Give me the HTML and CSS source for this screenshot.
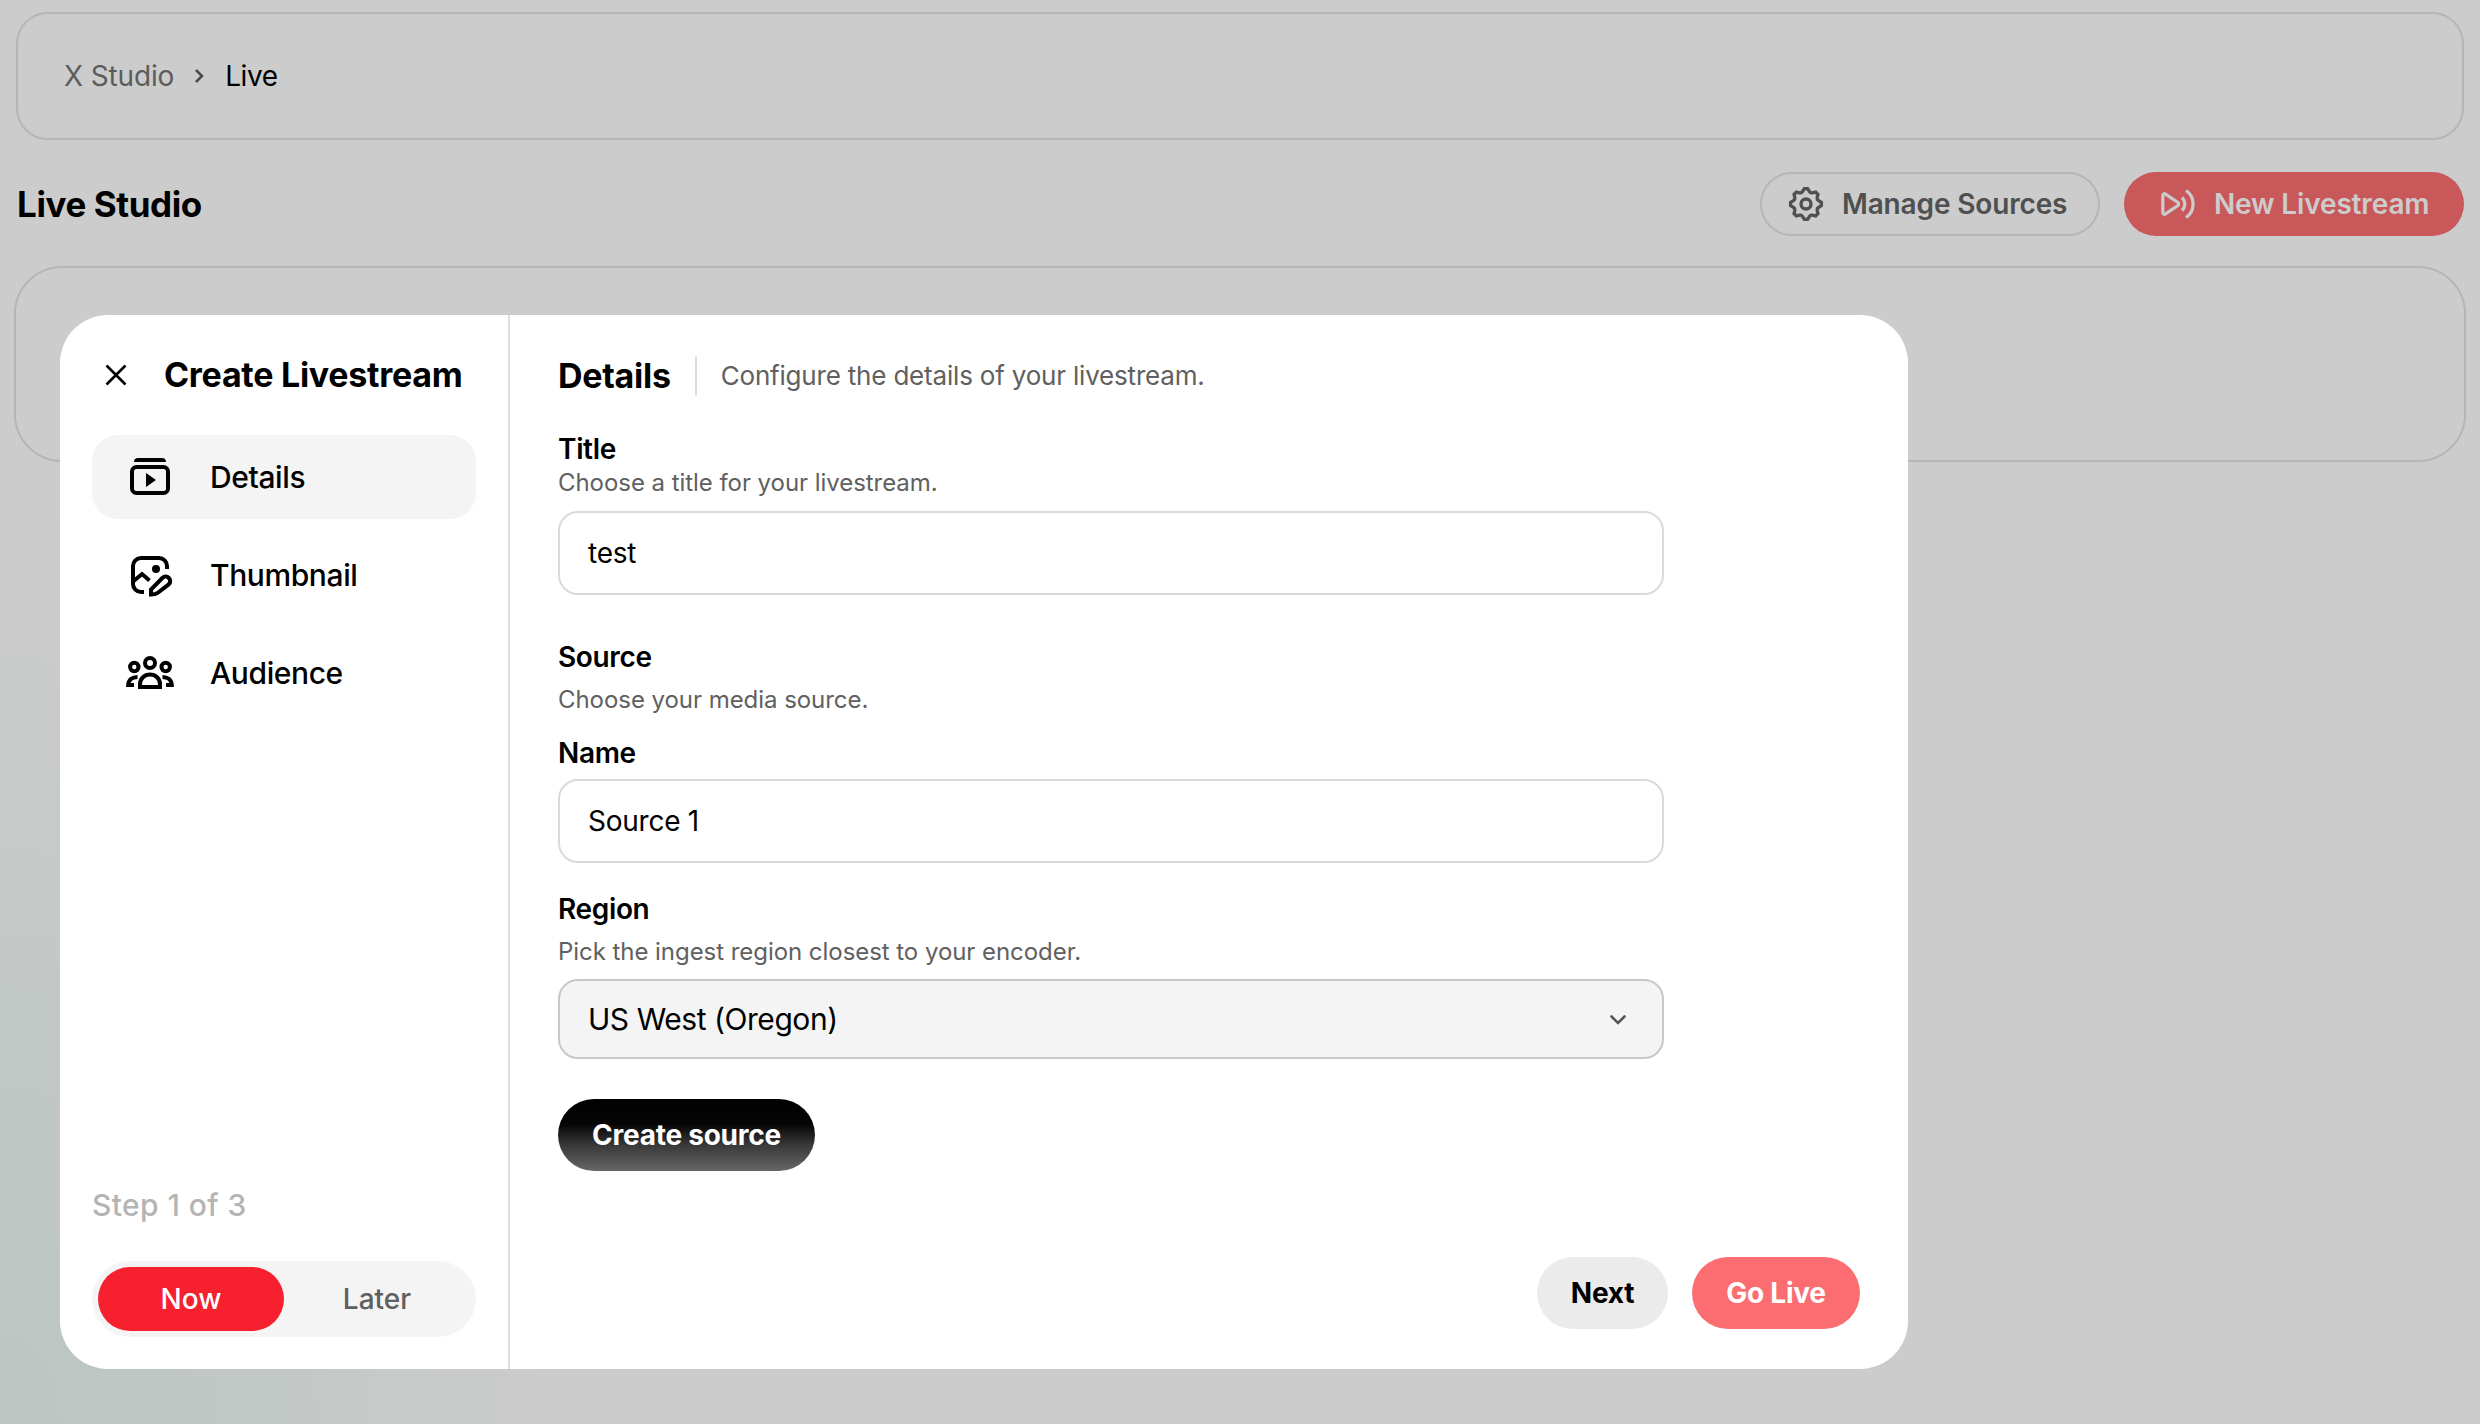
FILE: index.html
```html
<!DOCTYPE html>
<html lang="en">
<head>
<meta charset="utf-8">
<title>Live Studio</title>
<link rel="stylesheet" href="styles.css">
</head>
<body>
<div class="page">
  <nav class="breadcrumb">
    <span class="crumb">X Studio</span>
    <svg class="crumb-sep" viewBox="0 0 12 18"><path d="M3 3 9 9 3 15"/></svg>
    <span class="crumb-current">Live</span>
  </nav>
  <header class="page-head">
    <h1 class="page-title">Live Studio</h1>
    <div class="page-actions">
      <button class="action action-outline">
        <svg class="action-icon" viewBox="0 0 24 24"><path fill="currentColor" d="M10.540 1.750h2.920l1.570 2.360c.11.17.32.25.53.21l2.530-.59 2.170 2.170-.58 2.540c-.05.2.04.41.21.53l2.360 1.570v2.920l-2.360 1.570c-.17.12-.26.33-.21.53l.58 2.540-2.170 2.170-2.530-.59c-.21-.04-.42.04-.53.21l-1.570 2.360h-2.920l-1.580-2.360c-.11-.17-.32-.25-.52-.21l-2.540.59-2.170-2.170.58-2.540c.05-.2-.03-.41-.21-.53l-2.350-1.570v-2.920L4.100 8.970c.18-.12.26-.33.21-.53L3.730 5.900 5.900 3.730l2.540.59c.2.04.41-.04.52-.21l1.580-2.360zm1.070 2l-.98 1.470C10.050 6.080 9 6.500 7.990 6.270l-1.460-.34-.6.6.33 1.460c.24 1.010-.18 2.070-1.050 2.640l-1.460.98v.78l1.460.98c.87.57 1.290 1.630 1.050 2.640l-.33 1.460.6.6 1.460-.34c1.010-.23 2.060.19 2.640 1.050l.98 1.470h.78l.97-1.470c.58-.86 1.630-1.280 2.650-1.050l1.450.34.61-.6-.34-1.460c-.23-1.010.18-2.070 1.050-2.640l1.470-.98v-.78l-1.470-.98c-.87-.57-1.280-1.630-1.050-2.640l.34-1.460-.61-.6-1.450.34c-1.020.23-2.070-.19-2.650-1.050l-.97-1.470h-.78z"/><circle cx="12" cy="12" r="3" fill="none" stroke="currentColor" stroke-width="2"/></svg>
        <span>Manage Sources</span>
      </button>
      <button class="action action-primary">
        <svg class="action-icon" viewBox="0 0 40 40"><g fill="none" stroke="currentColor" stroke-width="3.200"><path stroke-linejoin="round" d="M4.800 11.500c0-1.600 1.400-2.300 2.700-1.400l12.500 8.400c1 .7 1 2.300 0 3L7.500 29.900c-1.300.9-2.700.2-2.700-1.400z"/><path d="M24 13.500c3.700 3.500 3.700 9.500 0 13"/><path d="M28 6.500c9.400 6.300 9.400 20.700 0 27"/></g></svg>
        <span>New Livestream</span>
      </button>
    </div>
  </header>
  <section class="empty-card"></section>
</div>

<div class="modal">
  <aside class="side">
    <div class="side-head">
      <svg class="close" viewBox="0 0 22 22"><path d="M1.500 1.500l19 19M20.500 1.500l-19 19"/></svg>
      <h2 class="heading side-title">Create Livestream</h2>
    </div>
    <ul class="steps">
      <li class="step step-active">
        <svg class="step-icon" viewBox="0 0 48 48"><path fill="currentColor" d="M8 9c0-2.500 1.500-4 4-4h24c2.500 0 4 1.500 4 4zM20 20l10 7-10 7z"/><rect x="6" y="14" width="36" height="26" rx="4.500" fill="none" stroke="currentColor" stroke-width="4"/></svg>
        <span>Details</span>
      </li>
      <li class="step">
        <svg class="step-icon" viewBox="0 0 48 48"><g fill="none" stroke="currentColor" stroke-width="4"><path d="M41 18v-3a8 8 0 0 0-8-8H15a8 8 0 0 0-8 8v18a8 8 0 0 0 8 8h3"/><path d="M7 30.500l9-7.500 7.500 6.500"/><path d="M25 43.500V38.500L36.300 27c4.500-4.200 10.800 2 6.400 6.400L31.500 42c-1.600 1.200-3.500 1.500-6.500 1.500z"/></g><circle cx="30" cy="18" r="4" fill="currentColor"/></svg>
        <span>Thumbnail</span>
      </li>
      <li class="step">
        <svg class="step-icon" viewBox="0 0 48 48"><g fill="none" stroke="currentColor" stroke-width="4"><circle cx="24" cy="14" r="5"/><circle cx="8.300" cy="18" r="4.200"/><circle cx="39.700" cy="18" r="4.200"/><path d="M14 38v-3c0-5.500 4.500-9.500 10-9.500s10 4 10 9.500v3z"/><path d="M11.500 28C6 28 2.500 31 2.200 36H8M36.500 28c5.500 0 9 3 9.300 8H40"/></g></svg>
        <span>Audience</span>
      </li>
    </ul>
    <div class="progress">Step 1 of 3</div>
    <div class="timing">
      <span class="timing-option timing-on">Now</span>
      <span class="timing-option">Later</span>
    </div>
  </aside>
  <main class="panel">
    <div class="panel-head">
      <h2 class="heading">Details</h2>
      <p class="panel-sub">Configure the details of your livestream.</p>
    </div>
    <form class="form">
      <div class="label">Title</div>
      <div class="hint">Choose a title for your livestream.</div>
      <div class="input input-title">test</div>
      <div class="label label-spaced">Source</div>
      <div class="hint hint-spaced">Choose your media source.</div>
      <div class="label label-name">Name</div>
      <div class="input input-name">Source 1</div>
      <div class="label label-region">Region</div>
      <div class="hint hint-spaced">Pick the ingest region closest to your encoder.</div>
      <div class="select"><span>US West (Oregon)</span><svg class="chevron" viewBox="0 0 18 12"><path d="M2.500 2.500 9 9l6.500-6.500"/></svg></div>
      <button type="button" class="btn btn-create">Create source</button>
    </form>
    <footer class="panel-foot">
      <button class="btn btn-next">Next</button>
      <button class="btn btn-live">Go Live</button>
    </footer>
  </main>
</div>
</body>
</html>
```
FILE: styles.css
```css
* { box-sizing: border-box; }

body {
  margin: 0;
  width: 2480px;
  height: 1424px;
  overflow: hidden;
  position: relative;
  font-family: Inter, "Liberation Sans", sans-serif;
  font-size: 28px;
  color: #000;
  white-space: nowrap;
  background: radial-gradient(ellipse 620px 960px at 0 100%, #bdc6c3 0%, #c0c7c4 35%, #c6cac8 62%, #cccccc 95%) #ccc;
}

h1, h2, p, ul { margin: 0; padding: 0; }
ul { list-style: none; }
button { font: inherit; border: 0; padding: 0; margin: 0; }
svg { display: block; flex: none; }

.page { padding: 12px 14px 0; }

.breadcrumb {
  margin: 0 2px;
  height: 128px;
  padding: 0 0 0 46px;
  display: flex;
  align-items: center;
  border: 2px solid #b4b7b6;
  border-radius: 32px;
  letter-spacing: -0.15px;
}
.crumb { color: #5c5c5c; }
.crumb-sep { width: 12px; height: 18px; margin: 0 20px 0 19px; fill: none; stroke: #4a4a4a; stroke-width: 2.5; }
.crumb-current { letter-spacing: -0.4px; }

.page-head {
  height: 64px;
  margin: 32px 2px 30px;
  display: flex;
  align-items: center;
  justify-content: space-between;
}
.page-title { font-size: 35px; font-weight: 700; letter-spacing: -0.4px; padding-left: 1px; }
.page-actions { display: flex; gap: 24px; }
.action {
  width: 340px;
  height: 64px;
  border-radius: 32px;
  display: flex;
  align-items: center;
  font-weight: 600;
  letter-spacing: -0.15px;
}
.action-icon { width: 40px; height: 40px; }
.action-outline { border: 2px solid #b4b7b6; background: none; color: #4f5050; padding-left: 24px; gap: 16px; }
.action-primary { background: #c8585a; color: #ccc; padding-left: 34px; gap: 16px; }

.empty-card { height: 196px; border: 2px solid #b4b7b6; border-radius: 48px; }

.modal {
  position: absolute;
  left: 60px;
  top: 315px;
  width: 1848px;
  height: 1054px;
  border-radius: 48px;
  background: #fff;
  display: flex;
}

.side {
  width: 450px;
  border-right: 2px solid #dedede;
  padding: 39px 32px 32px;
  display: flex;
  flex-direction: column;
}
.heading { font-size: 34px; font-weight: 700; line-height: 40px; letter-spacing: -0.28px; }
.side-head { display: flex; align-items: center; height: 42px; padding-left: 13px; }
.close { width: 22px; height: 22px; fill: none; stroke: #000; stroke-width: 2.6; }
.side-title { margin-left: 37px; }
.steps { margin-top: 39px; display: flex; flex-direction: column; gap: 14px; }
.step {
  height: 84px;
  width: 384px;
  padding-left: 34px;
  display: flex;
  align-items: center;
  gap: 36px;
  border-radius: 26px;
  font-size: 30px;
  font-weight: 500;
  letter-spacing: -0.4px;
}
.step-active { background: #f4f4f4; }
.step-icon { width: 48px; height: 48px; }
.progress {
  margin-top: auto;
  height: 40px;
  line-height: 40px;
  font-size: 30px;
  font-weight: 500;
  letter-spacing: 0.4px;
  color: #b4b4b4;
}
.timing {
  margin-top: 36px;
  height: 76px;
  width: 384px;
  padding: 6px;
  display: flex;
  border-radius: 38px;
  background: #f4f4f4;
}
.timing-option {
  flex: 1;
  display: flex;
  align-items: center;
  justify-content: center;
  border-radius: 32px;
  font-weight: 500;
  color: #5f5f5f;
}
.timing-on { background: #f6202e; color: #fff; }

.panel { flex: 1; padding: 41px 48px 40px; display: flex; flex-direction: column; }
.panel-head { display: flex; align-items: center; height: 40px; }
.panel-sub {
  margin-left: 24px;
  padding-left: 24px;
  border-left: 2px solid #dedede;
  font-size: 26px;
  line-height: 40px;
  letter-spacing: -0.19px;
  color: #606060;
}
.form { width: 1106px; margin-top: 35px; display: flex; flex-direction: column; align-items: flex-start; }
.label { height: 36px; line-height: 36px; font-weight: 600; letter-spacing: -0.35px; }
.hint { height: 32px; line-height: 32px; font-size: 24px; letter-spacing: -0.05px; color: #606060; }
.label-spaced { margin-top: 44px; }
.hint-spaced { margin-top: 9px; }
.label-name { margin-top: 19px; }
.label-region { margin-top: 28px; }
.input, .select {
  width: 100%;
  height: 84px;
  padding: 0 28px;
  display: flex;
  align-items: center;
  border: 2px solid #dadada;
  border-radius: 20px;
  letter-spacing: -0.25px;
}
.input-title { margin-top: 12px; }
.input-name { margin-top: 8px; }
.select {
  margin-top: 11px;
  height: 80px;
  justify-content: space-between;
  padding-right: 35px;
  border-color: #c8c8c8;
  background: #f4f4f4;
  font-size: 30px;
  letter-spacing: -0.45px;
}
.chevron { width: 18px; height: 12px; margin-top: 2px; fill: none; stroke: #555; stroke-width: 2.6; stroke-linecap: round; }

.btn { height: 72px; border-radius: 36px; font-weight: 700; letter-spacing: -0.25px; }
.btn-create { width: 257px; margin-top: 40px; color: #fff; background: linear-gradient(#000 0%, #050505 35%, #3a3a3a 65%, #666 100%); }
.panel-foot { margin-top: auto; display: flex; justify-content: flex-end; gap: 24px; }
.btn-next { width: 131px; background: #ebebeb; color: #000; }
.btn-live { width: 168px; background: #fb6d71; color: #fff; }
```
